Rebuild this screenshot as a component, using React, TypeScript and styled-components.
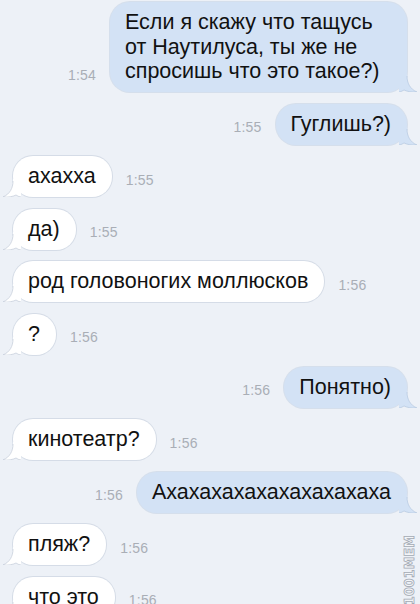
import styled, { createGlobalStyle } from "styled-components";

const GlobalStyle = createGlobalStyle`
  html, body {
    margin: 0;
    padding: 0;
    background: #edf1f7;
  }
  body {
    font-family: "Liberation Sans", Arial, sans-serif;
    -webkit-font-smoothing: antialiased;
  }
`;

type Side = "in" | "out";

const Screen = styled.div`
  position: relative;
  width: 420px;
  height: 604px;
  overflow: hidden;
  background: #edf1f7;
`;

const Thread = styled.div`
  display: flex;
  flex-direction: column;
  gap: 11.6px;
  padding: 2px 13px 0 13px;
`;

const Row = styled.div<{ $side: Side }>`
  display: flex;
  align-items: flex-end;
  gap: 14px;
  flex-direction: ${(p) => (p.$side === "out" ? "row-reverse" : "row")};
`;

const Bubble = styled.div<{ $side: Side }>`
  position: relative;
  max-width: ${(p) => (p.$side === "out" ? "266px" : "300px")};
  padding: 8px 16px 8.5px 15px;
  border-radius: 20px;
  font-size: 21.5px;
  line-height: 24.5px;
  color: #111;
  background: ${(p) => (p.$side === "out" ? "#d3e2f5" : "#ffffff")};
  box-shadow: ${(p) =>
    p.$side === "out"
      ? "0 0 0 1px rgba(170, 190, 215, 0.35)"
      : "0 0 0 1px rgba(185, 195, 210, 0.45)"};
`;

const Tail = styled.svg<{ $side: Side }>`
  position: absolute;
  bottom: 0;
  width: 18px;
  height: 18px;
  ${(p) =>
    p.$side === "out"
      ? "right: -10px;"
      : "left: -10px; transform: scaleX(-1);"}
`;

const Time = styled.span`
  flex-shrink: 0;
  padding-bottom: 9.5px;
  font-size: 14px;
  line-height: 16px;
  color: #a9aeb6;
  letter-spacing: 0.2px;
`;

const Watermark = styled.div`
  position: absolute;
  right: -24px;
  bottom: 26px;
  transform: rotate(-90deg);
  font-family: "DejaVu Sans Condensed", "Liberation Sans Narrow", sans-serif;
  font-weight: 700;
  font-size: 14px;
  letter-spacing: 0.2px;
  color: #f3f5f8;
  -webkit-text-stroke: 0.8px #a3aab4;
`;

const messages: { side: Side; text: string; time: string }[] = [
  {
    side: "out",
    text: "Если я скажу что тащусь от Наутилуса, ты же не спросишь что это такое?)",
    time: "1:54",
  },
  { side: "out", text: "Гуглишь?)", time: "1:55" },
  { side: "in", text: "ахахха", time: "1:55" },
  { side: "in", text: "да)", time: "1:55" },
  { side: "in", text: "род головоногих моллюсков", time: "1:56" },
  { side: "in", text: "?", time: "1:56" },
  { side: "out", text: "Понятно)", time: "1:56" },
  { side: "in", text: "кинотеатр?", time: "1:56" },
  { side: "out", text: "Ахахахахахахахахахаха", time: "1:56" },
  { side: "in", text: "пляж?", time: "1:56" },
  { side: "in", text: "что это", time: "1:56" },
];

const BubbleTail = ({ side }: { side: Side }) => {
  const fill = side === "out" ? "#d3e2f5" : "#ffffff";
  const edge = side === "out" ? "rgba(170,190,215,0.5)" : "rgba(185,195,210,0.6)";
  return (
    <Tail $side={side} viewBox="0 0 18 18">
      <path
        d="M0 0 H8 C8 9 11 15 18 18 C13 18.6 8 17.5 5 16 C3.5 17 2 17.8 0 18 Z"
        fill={fill}
      />
      <path
        d="M8 2 C8 9 11 15 18 18 C13 18.6 8 17.5 5 16 C3.5 17 2 17.8 0 18"
        fill="none"
        stroke={edge}
        strokeWidth="1"
      />
    </Tail>
  );
};

export default function App() {
  return (
    <>
      <GlobalStyle />
      <Screen>
        <Thread>
          {messages.map((m, i) => (
            <Row key={i} $side={m.side}>
              <Bubble $side={m.side}>
                {m.text}
                <BubbleTail side={m.side} />
              </Bubble>
              <Time>{m.time}</Time>
            </Row>
          ))}
        </Thread>
        <Watermark>1001MEM</Watermark>
      </Screen>
    </>
  );
}
